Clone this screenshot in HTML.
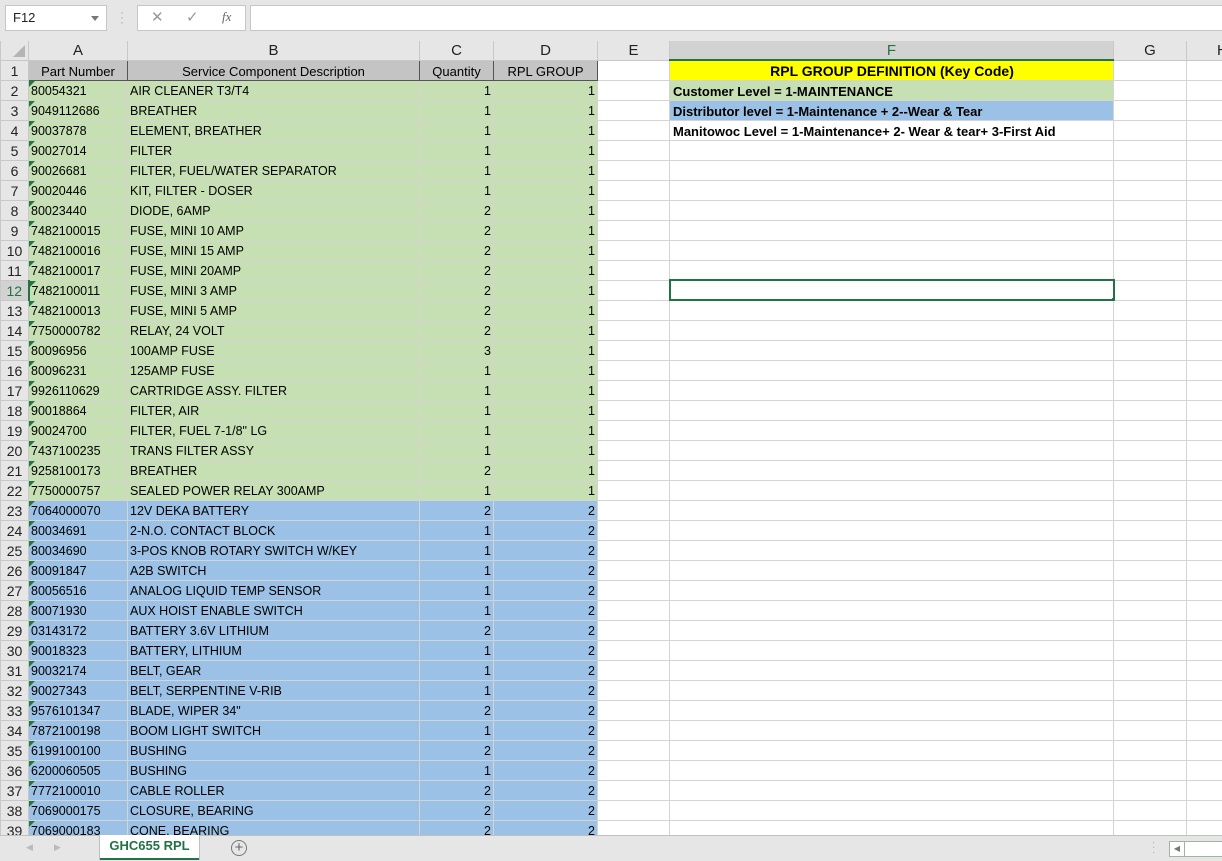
<!DOCTYPE html>
<html><head><meta charset="utf-8">
<style>
*{box-sizing:border-box;margin:0;padding:0}
body{width:1222px;height:861px;overflow:hidden;background:#fff;font-family:"Liberation Sans",Arial,sans-serif;position:relative}
#top{position:absolute;left:0;top:0;width:1222px;height:41px;background:#e6e6e6}
#nb{position:absolute;left:5px;top:5px;width:102px;height:26px;background:#fff;border:1px solid #c6c6c6;font-size:13px;line-height:24px;padding-left:7px;color:#222}
#nb:after{content:"";position:absolute;right:7px;top:10px;border:4px solid transparent;border-top:5px solid #777}
#dots{position:absolute;left:120px;top:10px;color:#aaa;font-size:12px;line-height:5px}
#fx{position:absolute;left:137px;top:5px;width:109px;height:26px;background:#fff;border:1px solid #c6c6c6;color:#999;font-size:15px}
#fi{position:absolute;left:250px;top:5px;width:980px;height:26px;background:#fff;border:1px solid #c6c6c6}
table{position:absolute;left:0;top:41px;border-collapse:collapse;table-layout:fixed;width:1240px}
td{height:20px;border:1px solid #d4d4d4;font-size:12.5px;white-space:nowrap;overflow:hidden;padding:2px 2px 0;color:#000;position:relative}
tr.h td{height:19px;background:#e6e6e6;text-align:center;font-size:15px;color:#222;border-color:#c8c8c8;border-top:none;padding-top:0}
td.r{background:#e6e6e6;text-align:center;font-size:14px;color:#222;border-color:#c8c8c8;padding:1px 0 0}
.g{background:#c6e0b4}.b{background:#9bc2e6}
.n{text-align:right}
.t:before{content:"";position:absolute;left:0;top:0;border:3px solid transparent;border-top:3px solid #1e7a3c;border-left:3px solid #1e7a3c}
tr.one td.hd{background:#c4c4c4;border:1px solid #555;text-align:center;font-size:13px}
.F{font-weight:bold;font-size:13px;padding-left:3px}
#bot{position:absolute;left:0;top:835px;width:1222px;height:26px;background:#e6e6e6;border-top:1px solid #c0c0c0}
#tab{position:absolute;left:100px;top:-1px;width:99px;height:25px;background:#fff;border-bottom:2px solid #217346;color:#217346;font-weight:bold;font-size:13px;text-align:center;line-height:22px;box-shadow:1px 0 0 #c0c0c0,-1px 0 0 #c0c0c0}
</style></head><body>
<div id="top">
<div id="nb">F12</div>
<div id="dots">·<br>·<br>·</div>
<div id="fx"><span style="position:absolute;left:13px;top:2px">✕</span><span style="position:absolute;left:48px;top:2px">✓</span><span style="position:absolute;left:84px;top:3px;font-style:italic;font-family:'Liberation Serif',serif;font-size:13px;color:#666">fx</span></div>
<div id="fi"></div>
</div>
<table>
<colgroup><col style="width:28px"><col style="width:99px"><col style="width:292px"><col style="width:74px"><col style="width:104px"><col style="width:72px"><col style="width:444px"><col style="width:73px"><col style="width:54px"></colgroup>
<tr class="h"><td style="position:relative"><span style="position:absolute;right:3px;bottom:3px;border:6px solid transparent;border-right-color:#b4b4b4;border-bottom-color:#b4b4b4"></span></td><td>A</td><td>B</td><td>C</td><td>D</td><td>E</td><td style="background:#d2d2d2;border-bottom:2px solid #217346;color:#217346">F</td><td>G</td><td style="text-align:left;padding-left:30px">H</td></tr>
<tr class="one"><td class="r">1</td><td class="hd">Part Number</td><td class="hd">Service Component Description</td><td class="hd">Quantity</td><td class="hd">RPL GROUP</td><td></td><td class="F" style="background:#ff0;text-align:center;font-size:14px">RPL GROUP DEFINITION (Key Code)</td><td></td><td></td></tr>
<tr><td class="r">2</td><td class="g t">80054321</td><td class="g">AIR CLEANER T3/T4</td><td class="g n">1</td><td class="g n">1</td><td></td><td class="F g">Customer Level = 1-MAINTENANCE</td><td></td><td></td></tr>
<tr><td class="r">3</td><td class="g t">9049112686</td><td class="g">BREATHER</td><td class="g n">1</td><td class="g n">1</td><td></td><td class="F b">Distributor level = 1-Maintenance + 2--Wear &amp; Tear</td><td></td><td></td></tr>
<tr><td class="r">4</td><td class="g t">90037878</td><td class="g">ELEMENT, BREATHER</td><td class="g n">1</td><td class="g n">1</td><td></td><td class="F">Manitowoc Level = 1-Maintenance+ 2- Wear &amp; tear+ 3-First Aid</td><td></td><td></td></tr>
<tr><td class="r">5</td><td class="g t">90027014</td><td class="g">FILTER</td><td class="g n">1</td><td class="g n">1</td><td></td><td></td><td></td><td></td></tr>
<tr><td class="r">6</td><td class="g t">90026681</td><td class="g">FILTER, FUEL/WATER SEPARATOR</td><td class="g n">1</td><td class="g n">1</td><td></td><td></td><td></td><td></td></tr>
<tr><td class="r">7</td><td class="g t">90020446</td><td class="g">KIT, FILTER - DOSER</td><td class="g n">1</td><td class="g n">1</td><td></td><td></td><td></td><td></td></tr>
<tr><td class="r">8</td><td class="g t">80023440</td><td class="g">DIODE, 6AMP</td><td class="g n">2</td><td class="g n">1</td><td></td><td></td><td></td><td></td></tr>
<tr><td class="r">9</td><td class="g t">7482100015</td><td class="g">FUSE, MINI 10 AMP</td><td class="g n">2</td><td class="g n">1</td><td></td><td></td><td></td><td></td></tr>
<tr><td class="r">10</td><td class="g t">7482100016</td><td class="g">FUSE, MINI 15 AMP</td><td class="g n">2</td><td class="g n">1</td><td></td><td></td><td></td><td></td></tr>
<tr><td class="r">11</td><td class="g t">7482100017</td><td class="g">FUSE, MINI 20AMP</td><td class="g n">2</td><td class="g n">1</td><td></td><td></td><td></td><td></td></tr>
<tr><td class="r" style="background:#d2d2d2;color:#217346;border-right:2px solid #217346">12</td><td class="g t">7482100011</td><td class="g">FUSE, MINI 3 AMP</td><td class="g n">2</td><td class="g n">1</td><td></td><td style="border:2px solid #217346"><span style="position:absolute;right:-4px;bottom:-4px;width:6px;height:6px;background:#217346;border:1px solid #fff"></span></td><td></td><td></td></tr>
<tr><td class="r">13</td><td class="g t">7482100013</td><td class="g">FUSE, MINI 5 AMP</td><td class="g n">2</td><td class="g n">1</td><td></td><td></td><td></td><td></td></tr>
<tr><td class="r">14</td><td class="g t">7750000782</td><td class="g">RELAY, 24 VOLT</td><td class="g n">2</td><td class="g n">1</td><td></td><td></td><td></td><td></td></tr>
<tr><td class="r">15</td><td class="g t">80096956</td><td class="g">100AMP FUSE</td><td class="g n">3</td><td class="g n">1</td><td></td><td></td><td></td><td></td></tr>
<tr><td class="r">16</td><td class="g t">80096231</td><td class="g">125AMP FUSE</td><td class="g n">1</td><td class="g n">1</td><td></td><td></td><td></td><td></td></tr>
<tr><td class="r">17</td><td class="g t">9926110629</td><td class="g">CARTRIDGE ASSY. FILTER</td><td class="g n">1</td><td class="g n">1</td><td></td><td></td><td></td><td></td></tr>
<tr><td class="r">18</td><td class="g t">90018864</td><td class="g">FILTER, AIR</td><td class="g n">1</td><td class="g n">1</td><td></td><td></td><td></td><td></td></tr>
<tr><td class="r">19</td><td class="g t">90024700</td><td class="g">FILTER, FUEL 7-1/8" LG</td><td class="g n">1</td><td class="g n">1</td><td></td><td></td><td></td><td></td></tr>
<tr><td class="r">20</td><td class="g t">7437100235</td><td class="g">TRANS FILTER ASSY</td><td class="g n">1</td><td class="g n">1</td><td></td><td></td><td></td><td></td></tr>
<tr><td class="r">21</td><td class="g t">9258100173</td><td class="g">BREATHER</td><td class="g n">2</td><td class="g n">1</td><td></td><td></td><td></td><td></td></tr>
<tr><td class="r">22</td><td class="g t">7750000757</td><td class="g">SEALED POWER RELAY 300AMP</td><td class="g n">1</td><td class="g n">1</td><td></td><td></td><td></td><td></td></tr>
<tr><td class="r">23</td><td class="b t">7064000070</td><td class="b">12V DEKA BATTERY</td><td class="b n">2</td><td class="b n">2</td><td></td><td></td><td></td><td></td></tr>
<tr><td class="r">24</td><td class="b t">80034691</td><td class="b">2-N.O. CONTACT BLOCK</td><td class="b n">1</td><td class="b n">2</td><td></td><td></td><td></td><td></td></tr>
<tr><td class="r">25</td><td class="b t">80034690</td><td class="b">3-POS KNOB ROTARY SWITCH W/KEY</td><td class="b n">1</td><td class="b n">2</td><td></td><td></td><td></td><td></td></tr>
<tr><td class="r">26</td><td class="b t">80091847</td><td class="b">A2B SWITCH</td><td class="b n">1</td><td class="b n">2</td><td></td><td></td><td></td><td></td></tr>
<tr><td class="r">27</td><td class="b t">80056516</td><td class="b">ANALOG LIQUID TEMP SENSOR</td><td class="b n">1</td><td class="b n">2</td><td></td><td></td><td></td><td></td></tr>
<tr><td class="r">28</td><td class="b t">80071930</td><td class="b">AUX HOIST ENABLE SWITCH</td><td class="b n">1</td><td class="b n">2</td><td></td><td></td><td></td><td></td></tr>
<tr><td class="r">29</td><td class="b t">03143172</td><td class="b">BATTERY 3.6V LITHIUM</td><td class="b n">2</td><td class="b n">2</td><td></td><td></td><td></td><td></td></tr>
<tr><td class="r">30</td><td class="b t">90018323</td><td class="b">BATTERY, LITHIUM</td><td class="b n">1</td><td class="b n">2</td><td></td><td></td><td></td><td></td></tr>
<tr><td class="r">31</td><td class="b t">90032174</td><td class="b">BELT, GEAR</td><td class="b n">1</td><td class="b n">2</td><td></td><td></td><td></td><td></td></tr>
<tr><td class="r">32</td><td class="b t">90027343</td><td class="b">BELT, SERPENTINE V-RIB</td><td class="b n">1</td><td class="b n">2</td><td></td><td></td><td></td><td></td></tr>
<tr><td class="r">33</td><td class="b t">9576101347</td><td class="b">BLADE, WIPER 34"</td><td class="b n">2</td><td class="b n">2</td><td></td><td></td><td></td><td></td></tr>
<tr><td class="r">34</td><td class="b t">7872100198</td><td class="b">BOOM LIGHT SWITCH</td><td class="b n">1</td><td class="b n">2</td><td></td><td></td><td></td><td></td></tr>
<tr><td class="r">35</td><td class="b t">6199100100</td><td class="b">BUSHING</td><td class="b n">2</td><td class="b n">2</td><td></td><td></td><td></td><td></td></tr>
<tr><td class="r">36</td><td class="b t">6200060505</td><td class="b">BUSHING</td><td class="b n">1</td><td class="b n">2</td><td></td><td></td><td></td><td></td></tr>
<tr><td class="r">37</td><td class="b t">7772100010</td><td class="b">CABLE ROLLER</td><td class="b n">2</td><td class="b n">2</td><td></td><td></td><td></td><td></td></tr>
<tr><td class="r">38</td><td class="b t">7069000175</td><td class="b">CLOSURE, BEARING</td><td class="b n">2</td><td class="b n">2</td><td></td><td></td><td></td><td></td></tr>
<tr><td class="r">39</td><td class="b t">7069000183</td><td class="b">CONE, BEARING</td><td class="b n">2</td><td class="b n">2</td><td></td><td></td><td></td><td></td></tr>
</table>
<div id="bot">
<span style="position:absolute;left:26px;top:6px;color:#bbb;font-size:9px">◀</span>
<span style="position:absolute;left:54px;top:6px;color:#bbb;font-size:9px">▶</span>
<div id="tab">GHC655 RPL</div>
<span style="position:absolute;left:231px;top:4px;width:16px;height:16px;border:1px solid #777;border-radius:50%;color:#666;font-size:15px;line-height:13px;text-align:center">+</span>
<span style="position:absolute;left:1152px;top:4px;color:#aaa;font-size:10px;line-height:5px">·<br>·<br>·</span>
<div style="position:absolute;left:1169px;top:5px;width:60px;height:16px;background:#fff;border:1px solid #9fb59f"><div style="width:15px;height:14px;border-right:1px solid #9fb59f;color:#777;font-size:8px;text-align:center;line-height:14px">◀</div></div>
</div>
</body></html>
